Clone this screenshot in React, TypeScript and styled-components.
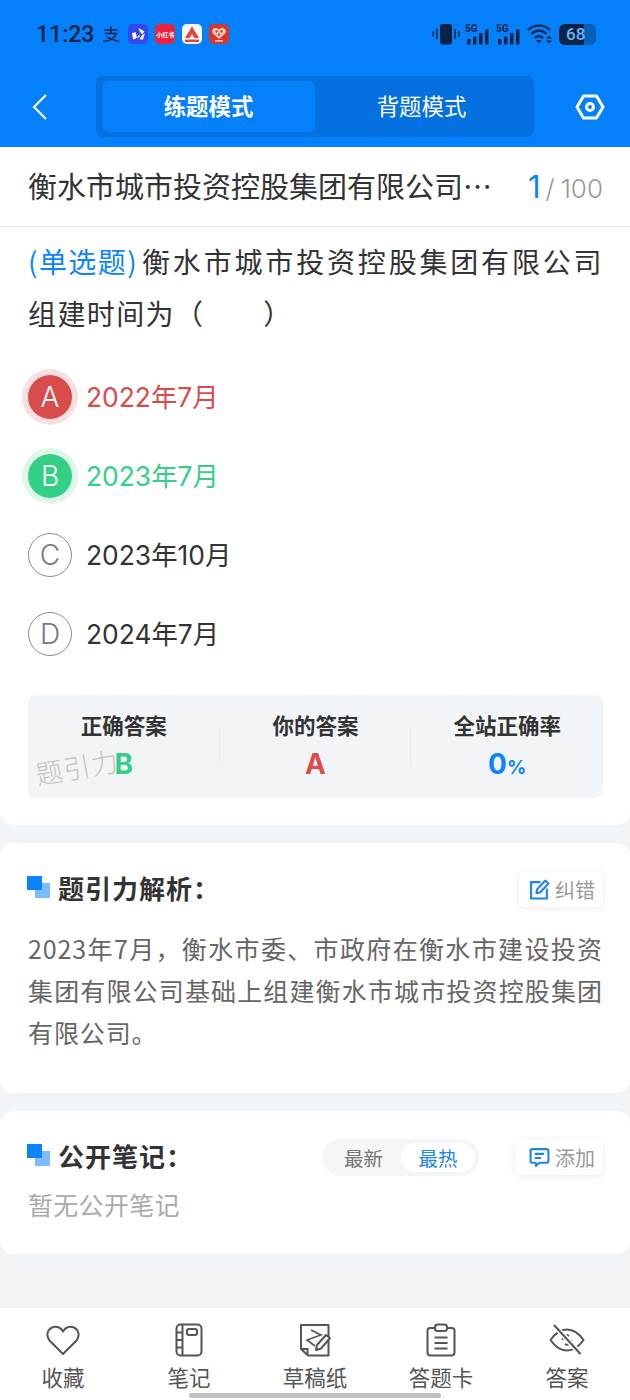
import styled, { createGlobalStyle } from 'styled-components';

const GlobalStyle = createGlobalStyle`
  html, body { margin: 0; padding: 0; background: #f2f5f8; }
  * { box-sizing: border-box; }
  body { font-family: "Noto Sans CJK SC", "Noto Sans", sans-serif; }
`;

const options = [
  { key: 'A', text: '2022年7月', state: 'wrong' },
  { key: 'B', text: '2023年7月', state: 'right' },
  { key: 'C', text: '2023年10月', state: 'idle' },
  { key: 'D', text: '2024年7月', state: 'idle' },
];

const optionColor: Record<string, string> = { wrong: '#d94c4c', right: '#34cf86', idle: '#333' };
const optionHalo: Record<string, string> = { wrong: '#f9e0e0', right: '#dff7ea', idle: 'transparent' };

const HeartIcon = () => (
  <svg width="34" height="34" viewBox="0 0 34 34" fill="none" stroke="#555" strokeWidth="2">
    <path d="M17 31 L3.5 17.5 C0 13 1 7 6 4.5 C10.5 2.5 15 4.5 17 8.5 C19 4.5 23.5 2.5 28 4.5 C33 7 34 13 30.5 17.5 Z" strokeLinejoin="round" />
  </svg>
);

const NoteIcon = () => (
  <svg width="34" height="34" viewBox="0 0 34 34" fill="none" stroke="#555" strokeWidth="2">
    <rect x="4.5" y="1.5" width="25" height="31" rx="4" />
    <path d="M10.5 1.5 V32.5 M4.5 9.5 H10.5 M4.5 17 H10.5 M4.5 24.5 H10.5" />
    <rect x="15" y="6" width="10" height="6" rx="2" />
  </svg>
);

const DraftIcon = () => (
  <svg width="34" height="34" viewBox="0 0 34 34" fill="none" stroke="#555" strokeWidth="2">
    <path d="M3 2 H30.5 V32.5 H10 L3 26 Z" strokeLinejoin="round" />
    <path d="M3 26 H9.5 V32" />
    <path d="M13 7 L23 12 L9 17 L17 23" strokeWidth="1.6" />
    <path d="M18 27 L19 22 L28 12 L32 15 L23 25.5 Z" fill="#fff" strokeLinejoin="round" />
  </svg>
);

const CardIcon = () => (
  <svg width="34" height="34" viewBox="0 0 34 34" fill="none" stroke="#555" strokeWidth="2">
    <path d="M11 5 H6 Q3.5 5 3.5 7.5 V29.5 Q3.5 32.5 6.5 32.5 H27.5 Q30.5 32.5 30.5 29.5 V7.5 Q30.5 5 28 5 H23" />
    <rect x="11" y="1.5" width="12" height="6.5" rx="2.5" />
    <path d="M10.5 14.5 H23.5 M10.5 20 H23.5 M10.5 25.5 H23.5" />
  </svg>
);

const EyeOffIcon = () => (
  <svg width="36" height="34" viewBox="0 0 36 34" fill="none" stroke="#555" strokeWidth="2">
    <path d="M1.5 17 C7 9 12 6.5 18 6.5 C24 6.5 29 9 34.5 17 C29 25 24 27.5 18 27.5 C12 27.5 7 25 1.5 17 Z" />
    <path d="M13.5 17 A4.5 4.5 0 0 1 20 12.8 M22.5 17 A4.5 4.5 0 0 1 16 21.2" />
    <path d="M5 2 L31.5 31" stroke="#fff" strokeWidth="5" />
    <path d="M5 2 L31.5 31" />
  </svg>
);

const tools = [
  { label: '收藏', icon: <HeartIcon /> },
  { label: '笔记', icon: <NoteIcon /> },
  { label: '草稿纸', icon: <DraftIcon /> },
  { label: '答题卡', icon: <CardIcon /> },
  { label: '答案', icon: <EyeOffIcon /> },
];

const SignalIcon = () => (
  <svg width="26" height="22" viewBox="0 0 26 22">
    <text x="0" y="8.5" fontSize="10" fontWeight="700" fontFamily="Roboto, sans-serif" fill="#0b2347">5G</text>
    <g fill="#0b2347">
      <rect x="2" y="16" width="3.5" height="5.5" rx="1" />
      <rect x="8" y="13.5" width="3.5" height="8" rx="1" />
      <rect x="14" y="10" width="3.5" height="11.5" rx="1" />
      <rect x="20" y="6.5" width="3.5" height="15" rx="1" />
    </g>
  </svg>
);

export default function App() {
  return (
    <Page>
      <GlobalStyle />
      <Header>
        <StatusBar>
          <StatusLeft>
            <Clock>11:23</Clock>
            <AppIcons>
              <svg width="20" height="20" viewBox="0 0 20 20" fill="none" stroke="#0b2347" strokeWidth="1.4">
                <path d="M3 6 H17 M10 2.5 V9 M4 9.5 H15.5 C13.5 14 9 17 2.5 17.5 M5.5 12.5 C9 15 13 16.5 18 17.5" />
              </svg>
              <AppBadge $bg="#3347ee">
                <svg width="15" height="15" viewBox="0 0 14 14" fill="#fff">
                  <path d="M7 1 L12.5 4.2 L10.5 7 L8 4 Z M13 6 L11 12 L8 11.5 L10 8 Z M2 12 L1 5.5 L4.5 5 L5.5 10 Z M6 11 L6.5 7.5 L8.5 8.5 Z" />
                </svg>
              </AppBadge>
              <AppBadge $bg="#f0203f"><BadgeLabel>小红书</BadgeLabel></AppBadge>
              <AppBadge $bg="#fff">
                <svg width="18" height="18" viewBox="0 0 18 18">
                  <path d="M9 1.5 L16 13 H11.5 L9 9 L6.5 13 H2 Z" fill="#e8423a" />
                  <rect x="2" y="14.5" width="14" height="2.5" fill="#e8423a" />
                </svg>
              </AppBadge>
              <AppBadge $bg="#d8352c">
                <svg width="18" height="18" viewBox="0 0 18 18">
                  <path d="M9 14 L3 8.5 C1 6 3 2.5 6 3 C7.5 3.2 8.5 4 9 5 C9.5 4 10.5 3.2 12 3 C15 2.5 17 6 15 8.5 Z" fill="#f6cdb8" />
                  <circle cx="6.5" cy="6.5" r="1.2" fill="#d8352c" />
                  <circle cx="11.5" cy="6.5" r="1.2" fill="#d8352c" />
                  <circle cx="9" cy="9.5" r="1.2" fill="#d8352c" />
                  <rect x="5" y="15" width="8" height="1.6" fill="#f6cdb8" />
                </svg>
              </AppBadge>
            </AppIcons>
          </StatusLeft>
          <StatusRight>
            <svg width="28" height="22" viewBox="0 0 28 22" fill="#0b2347">
              <rect x="8" y="1" width="12" height="20.5" rx="2.5" />
              <rect x="0.5" y="8.5" width="1.6" height="5" />
              <rect x="4" y="6" width="1.6" height="10" />
              <rect x="22.4" y="6" width="1.6" height="10" />
              <rect x="26" y="8.5" width="1.6" height="5" />
            </svg>
            <SignalIcon />
            <SignalIcon />
            <svg width="26" height="22" viewBox="0 0 26 22" fill="none" stroke="#0b2347" strokeWidth="2.2">
              <path d="M1 7 C7 1 17 1 23 7 M4.5 11 C9 6.5 15 6.5 19.5 11 M8 15 C10.5 12.5 13.5 12.5 16 15" />
              <path d="M9.5 17 H14.5 L12 20.5 Z" fill="#0b2347" stroke="none" />
              <path d="M19 15.5 H25 L22 12.5 Z M19 17.5 H25 L22 20.5 Z" fill="#0b2347" stroke="none" />
            </svg>
            <Battery>
              <BatteryFill>68</BatteryFill>
            </Battery>
          </StatusRight>
        </StatusBar>
        <NavBar>
          <BackButton>
            <svg width="16" height="28" viewBox="0 0 16 28" fill="none" stroke="#fff" strokeWidth="2.2">
              <path d="M14 2 L2 14 L14 26" />
            </svg>
          </BackButton>
          <ModeSwitch>
            <ModeTab $active>练题模式</ModeTab>
            <ModeTab>背题模式</ModeTab>
          </ModeSwitch>
          <SettingButton>
            <svg width="30" height="26" viewBox="0 0 30 26" fill="none" stroke="#fff" strokeWidth="3">
              <path d="M8.5 2 H21.5 L28 13 L21.5 24 H8.5 L2 13 Z" strokeLinejoin="round" />
              <circle cx="15" cy="13" r="3.5" />
            </svg>
          </SettingButton>
        </NavBar>
      </Header>

      <QuestionCard>
        <TitleRow>
          <PaperTitle>衡水市城市投资控股集团有限公司…</PaperTitle>
          <Progress><b>1</b><i>/</i>100</Progress>
        </TitleRow>
        <QuestionBody>
          <QuestionText><em>(单选题)</em>衡水市城市投资控股集团有限公司组建时间为（　　）</QuestionText>
          <OptionList>
            {options.map((o) => (
              <OptionRow key={o.key}>
                <OptionBadge $state={o.state}>{o.key}</OptionBadge>
                <OptionText $state={o.state}>{o.text}</OptionText>
              </OptionRow>
            ))}
          </OptionList>
          <Summary>
            <SummaryCell>
              <SummaryLabel>正确答案</SummaryLabel>
              <SummaryValue $color="#34cf86">B</SummaryValue>
              <Watermark>题引力</Watermark>
            </SummaryCell>
            <SummaryCell $divided>
              <SummaryLabel>你的答案</SummaryLabel>
              <SummaryValue $color="#d94c4c">A</SummaryValue>
            </SummaryCell>
            <SummaryCell $divided>
              <SummaryLabel>全站正确率</SummaryLabel>
              <SummaryValue $color="#0a84ff">0<small>%</small></SummaryValue>
            </SummaryCell>
          </Summary>
        </QuestionBody>
      </QuestionCard>

      <AnalysisCard>
        <SectionHead>
          <SectionTitle><Squares /><span>题引力解析：</span></SectionTitle>
          <ChipButton>
            <svg width="21" height="21" viewBox="0 0 20 20" fill="none" stroke="#1f86e8" strokeWidth="2">
              <path d="M11 3 H2 V18.5 H17 V9" />
              <path d="M7 13.5 L7.8 9.8 L15.5 1.5 L18.5 4.3 L10.8 12.6 Z" strokeLinejoin="round" />
            </svg>
            纠错
          </ChipButton>
        </SectionHead>
        <AnalysisText>2023年7月，衡水市委、市政府在衡水市建设投资集团有限公司基础上组建衡水市城市投资控股集团有限公司。</AnalysisText>
      </AnalysisCard>

      <NotesCard>
        <SectionHead>
          <SectionTitle><Squares /><span>公开笔记：</span></SectionTitle>
          <NotesActions>
            <SortSwitch>
              <SortTab>最新</SortTab>
              <SortTab $active>最热</SortTab>
            </SortSwitch>
            <ChipButton $wide>
              <svg width="21" height="21" viewBox="0 0 20 20" fill="none" stroke="#1f86e8" strokeWidth="2">
                <path d="M3.5 2 H16.5 Q18.5 2 18.5 4 V13 Q18.5 15 16.5 15 H10 L6.5 18 V15 H3.5 Q1.5 15 1.5 13 V4 Q1.5 2 3.5 2 Z" strokeLinejoin="round" />
                <path d="M5.5 6.5 H14.5 M5.5 10.5 H11.5" />
              </svg>
              添加
            </ChipButton>
          </NotesActions>
        </SectionHead>
        <EmptyNotes>暂无公开笔记</EmptyNotes>
      </NotesCard>

      <Spacer />

      <TabBar>
        {tools.map((t) => (
          <TabItem key={t.label}>
            {t.icon}
            <TabLabel>{t.label}</TabLabel>
          </TabItem>
        ))}
        <HomeIndicator />
      </TabBar>
    </Page>
  );
}

const Page = styled.div`
  width: 630px;
  height: 1400px;
  overflow: hidden;
  display: flex;
  flex-direction: column;
  background: #f2f5f8;
`;

const Header = styled.header`
  height: 147px;
  flex: none;
  background: #0580fb;
  display: flex;
  flex-direction: column;
`;

const StatusBar = styled.div`
  height: 76px;
  padding: 0 34px 8px 36px;
  display: flex;
  align-items: center;
  justify-content: space-between;
`;

const StatusLeft = styled.div`
  display: flex;
  align-items: center;
  gap: 12px;
`;

const Clock = styled.span`
  font-family: "Roboto", sans-serif;
  font-size: 23px;
  font-weight: 500;
  color: #0b2347;
`;

const AppIcons = styled.div`
  display: flex;
  align-items: center;
  gap: 7px;
  margin-left: -5px;
`;

const AppBadge = styled.span<{ $bg: string }>`
  width: 20px;
  height: 20px;
  border-radius: 5px;
  background: ${(p) => p.$bg};
  display: flex;
  align-items: center;
  justify-content: center;
  overflow: hidden;
`;

const BadgeLabel = styled.span`
  font-size: 6px;
  font-weight: 700;
  color: #fff;
  white-space: nowrap;
`;

const StatusRight = styled.div`
  display: flex;
  align-items: center;
  gap: 5px;
`;

const Battery = styled.div`
  width: 37px;
  height: 21px;
  margin-left: 1px;
  border-radius: 6px;
  background: #0a5fb6;
  overflow: hidden;
`;

const BatteryFill = styled.div`
  width: 68%;
  height: 100%;
  background: #0b2347;
  color: #6db2f5;
  font-family: "Roboto", sans-serif;
  font-size: 17px;
  font-weight: 500;
  line-height: 21px;
  padding-left: 7px;
  white-space: nowrap;
`;

const NavBar = styled.div`
  height: 61px;
  display: flex;
  align-items: center;
`;

const BackButton = styled.div`
  width: 96px;
  padding-left: 32px;
  display: flex;
  align-items: center;
`;

const ModeSwitch = styled.div`
  width: 438px;
  height: 61px;
  padding: 5px 6px;
  border-radius: 7px;
  background: #0570e0;
  display: flex;
`;

const ModeTab = styled.div<{ $active?: boolean }>`
  flex: 1;
  padding-bottom: 3px;
  border-radius: 6px;
  background: ${(p) => (p.$active ? '#0580fb' : 'transparent')};
  color: #fff;
  font-size: 22.4px;
  font-weight: ${(p) => (p.$active ? 700 : 400)};
  display: flex;
  align-items: center;
  justify-content: center;
`;

const SettingButton = styled.div`
  flex: 1;
  padding-left: 15px;
  display: flex;
  align-items: center;
  justify-content: center;
`;

const QuestionCard = styled.section`
  height: 678px;
  flex: none;
  background: #fff;
  border-radius: 0 0 14px 14px;
`;

const TitleRow = styled.div`
  height: 80px;
  padding: 0 27px 0 28px;
  border-bottom: 1px solid #e4e4e4;
  display: flex;
  align-items: center;
  justify-content: space-between;
`;

const PaperTitle = styled.div`
  padding-bottom: 3px;
  font-size: 29px;
  color: #333;
  white-space: nowrap;
`;

const Progress = styled.div`
  font-family: "Inter", sans-serif;
  font-size: 26px;
  font-weight: 300;
  color: #999;

  b {
    font-weight: 400;
    font-size: 31px;
    color: #0a84ff;
  }

  i {
    font-style: normal;
    margin: 0 6px 0 5px;
  }
`;

const QuestionBody = styled.div`
  padding: 8px 27px 0 28px;
`;

const QuestionText = styled.p`
  margin: 0;
  font-size: 28px;
  line-height: 52px;
  letter-spacing: 1.4px;
  text-align: justify;
  color: #333;

  em {
    font-style: normal;
    color: #0a84ff;
    letter-spacing: 0;
    margin-right: 4px;
  }
`;

const OptionList = styled.div`
  margin-top: 36px;
  display: flex;
  flex-direction: column;
  gap: 35px;
`;

const OptionRow = styled.div`
  height: 44px;
  display: flex;
  align-items: center;
  gap: 14px;
`;

const OptionBadge = styled.span<{ $state: string }>`
  width: 44px;
  height: 44px;
  border-radius: 50%;
  padding-bottom: 1px;
  font-family: "Inter", sans-serif;
  font-size: 28px;
  font-weight: 300;
  display: flex;
  align-items: center;
  justify-content: center;
  color: ${(p) => (p.$state === 'idle' ? '#77778a' : '#fff')};
  background: ${(p) => (p.$state === 'idle' ? '#fff' : optionColor[p.$state])};
  border: ${(p) => (p.$state === 'idle' ? '1px solid #8a8aa0' : 'none')};
  box-shadow: 0 0 0 6px ${(p) => optionHalo[p.$state]};
`;

const OptionText = styled.span<{ $state: string }>`
  padding-bottom: 4px;
  font-family: "Inter", "Noto Sans CJK SC", sans-serif;
  font-size: 26.4px;
  color: ${(p) => optionColor[p.$state]};
`;

const Summary = styled.div`
  margin-top: 39px;
  height: 103px;
  border-radius: 8px;
  background: #f2f5f8;
  display: flex;
`;

const SummaryCell = styled.div<{ $divided?: boolean }>`
  position: relative;
  flex: 1;
  display: flex;
  flex-direction: column;
  align-items: center;
  padding-top: 15px;

  &::before {
    content: '';
    display: ${(p) => (p.$divided ? 'block' : 'none')};
    position: absolute;
    left: -1px;
    top: 32px;
    height: 38px;
    width: 1px;
    background: #e9ecef;
  }
`;

const SummaryLabel = styled.span`
  font-size: 21.5px;
  font-weight: 700;
  line-height: 30px;
  color: #333;
`;

const SummaryValue = styled.span<{ $color: string }>`
  margin-top: 5px;
  font-family: "Inter", sans-serif;
  font-size: 28px;
  font-weight: 700;
  line-height: 38px;
  color: ${(p) => p.$color};

  small {
    font-size: 19px;
  }
`;

const Watermark = styled.span`
  position: absolute;
  left: 7px;
  top: 52px;
  font-size: 27px;
  font-weight: 300;
  letter-spacing: 1px;
  color: #c4c4c4;
  transform: rotate(-10deg);
  white-space: nowrap;
`;

const AnalysisCard = styled.section`
  height: 250px;
  margin-top: 18px;
  flex: none;
  padding: 27px 27px 0 27px;
  border-radius: 14px;
  background: #fff;
`;

const NotesCard = styled.section`
  height: 143px;
  margin-top: 18px;
  flex: none;
  padding: 27px 27px 0 27px;
  border-radius: 14px;
  background: #fff;
`;

const SectionHead = styled.div`
  height: 38px;
  display: flex;
  align-items: center;
  justify-content: space-between;
`;

const SectionTitle = styled.h2`
  margin: 0;
  font-size: 26px;
  font-weight: 700;
  letter-spacing: 1px;
  color: #333;
  display: flex;
  align-items: center;
  gap: 8px;

  span {
    margin-top: -4px;
  }
`;

const Squares = styled.span`
  width: 23px;
  height: 22px;
  margin-top: 2px;
  flex: none;
  background: linear-gradient(#0a84ff, #0a84ff) 0 0 / 15px 14px no-repeat,
    linear-gradient(#7dbcff, #7dbcff) 8px 7px / 15px 15px no-repeat;
`;

const ChipButton = styled.div<{ $wide?: boolean }>`
  width: ${(p) => (p.$wide ? '88px' : '84px')};
  height: 36px;
  padding-right: 8px;
  border-radius: 6px;
  background: #fff;
  box-shadow: 0 1px 6px rgba(0, 0, 0, 0.09);
  color: #999;
  font-size: 20px;
  display: flex;
  align-items: center;
  justify-content: flex-end;
  gap: 5px;
`;

const AnalysisText = styled.p`
  margin: 19px 0 0 1px;
  font-size: 25px;
  line-height: 42px;
  letter-spacing: 0.9px;
  text-align: justify;
  color: #666;
`;

const NotesActions = styled.div`
  display: flex;
  align-items: center;
  gap: 36px;
`;

const SortSwitch = styled.div`
  width: 157px;
  height: 37px;
  padding: 4px;
  border-radius: 19px;
  background: #f5f5f5;
  display: flex;
  align-items: center;
  justify-content: flex-end;
`;

const SortTab = styled.span<{ $active?: boolean }>`
  width: ${(p) => (p.$active ? '74px' : '75px')};
  height: 29px;
  border-radius: 15px;
  background: ${(p) => (p.$active ? '#fff' : 'transparent')};
  color: ${(p) => (p.$active ? '#1f86e8' : '#777')};
  font-size: 19.5px;
  display: flex;
  align-items: center;
  justify-content: center;
`;

const EmptyNotes = styled.div`
  margin: 10px 0 0 1px;
  font-size: 25px;
  letter-spacing: 0.3px;
  line-height: 36px;
  color: #aaa;
`;

const Spacer = styled.div`
  flex: 1;
`;

const TabBar = styled.nav`
  position: relative;
  height: 92px;
  flex: none;
  padding: 15px 0 0 0;
  background: #fff;
  display: flex;
  align-items: flex-start;
  justify-content: space-around;
`;

const TabItem = styled.div`
  width: 126px;
  display: flex;
  flex-direction: column;
  align-items: center;
  gap: 5px;
`;

const TabLabel = styled.span`
  font-size: 21.5px;
  line-height: 30px;
  color: #555;
`;

const HomeIndicator = styled.span`
  position: absolute;
  left: 189px;
  bottom: 2px;
  width: 252px;
  height: 5px;
  border-radius: 3px;
  background: #bfbfbf;
`;
